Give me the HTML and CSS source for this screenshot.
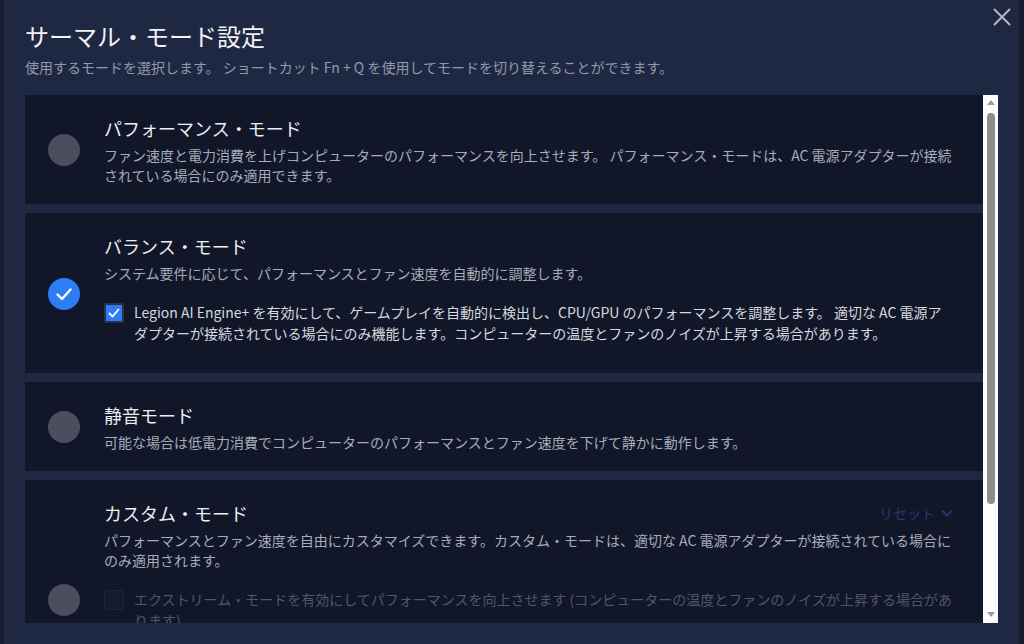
FILE: index.html
```html
<!DOCTYPE html>
<html lang="ja">
<head>
  <meta charset="UTF-8" />
  <title>サーマル・モード設定</title>
  <link rel="stylesheet" href="styles.css">
</head>
<body>
  <div class="dialog" role="dialog" aria-labelledby="dialogTitle">
    <button class="close-button" type="button" aria-label="閉じる">
      <svg width="18" height="18" viewBox="0 0 18 18" aria-hidden="true">
        <path d="M1.5 1.5 L16.5 16.5 M16.5 1.5 L1.5 16.5" stroke="#b2b7c3" stroke-width="2" stroke-linecap="round" fill="none"/>
      </svg>
    </button>

    <h1 class="dialog-title" id="dialogTitle">サーマル・モード設定</h1>
    <p class="dialog-subtitle">使用するモードを選択します。 ショートカット Fn + Q を使用してモードを切り替えることができます。</p>

    <div class="mode-area">
      <div class="mode-list" role="radiogroup" aria-label="サーマル・モード">
        <!-- パフォーマンス -->
        <div class="mode-card" role="radio" aria-checked="false">
          <span class="radio"></span>
          <div class="mode-body">
            <div class="mode-title">パフォーマンス・モード</div>
            <div class="mode-desc">ファン速度と電力消費を上げコンピューターのパフォーマンスを向上させます。 パフォーマンス・モードは、AC 電源アダプターが接続されている場合にのみ適用できます。</div>
          </div>
        </div>

        <!-- バランス -->
        <div class="mode-card" role="radio" aria-checked="true">
          <span class="radio checked">
            <svg width="32" height="32" viewBox="0 0 32 32" aria-hidden="true">
              <path d="M9.5 16.5 L14 21 L22.5 11.5" stroke="#fff" stroke-width="2.4" stroke-linecap="round" stroke-linejoin="round" fill="none"/>
            </svg>
          </span>
          <div class="mode-body">
            <div class="mode-title">バランス・モード</div>
            <div class="mode-desc">システム要件に応じて、パフォーマンスとファン速度を自動的に調整します。</div>
            <label class="option">
              <span class="checkbox checked">
                <svg width="16" height="16" viewBox="0 0 16 16" aria-hidden="true">
                  <path d="M3.5 8.5 L6.5 11.5 L12.5 4.5" stroke="#fff" stroke-width="1.8" stroke-linecap="round" stroke-linejoin="round" fill="none"/>
                </svg>
              </span>
              <span class="option-text">Legion AI Engine+ を有効にして、ゲームプレイを自動的に検出し、CPU/GPU のパフォーマンスを調整します。 適切な AC 電源アダプターが接続されている場合にのみ機能します。コンピューターの温度とファンのノイズが上昇する場合があります。</span>
            </label>
          </div>
        </div>

        <!-- 静音 -->
        <div class="mode-card" role="radio" aria-checked="false">
          <span class="radio"></span>
          <div class="mode-body">
            <div class="mode-title">静音モード</div>
            <div class="mode-desc">可能な場合は低電力消費でコンピューターのパフォーマンスとファン速度を下げて静かに動作します。</div>
          </div>
        </div>

        <!-- カスタム -->
        <div class="mode-card custom" role="radio" aria-checked="false">
          <span class="radio"></span>
          <div class="mode-body">
            <div class="mode-title-row">
              <div class="mode-title">カスタム・モード</div>
              <button class="reset-link" type="button" disabled>
                リセット
                <svg width="14" height="14" viewBox="0 0 14 14" aria-hidden="true">
                  <path d="M2.5 5 L7 9.5 L11.5 5" stroke="#243a6c" stroke-width="1.8" stroke-linecap="round" stroke-linejoin="round" fill="none"/>
                </svg>
              </button>
            </div>
            <div class="mode-desc">パフォーマンスとファン速度を自由にカスタマイズできます。カスタム・モードは、適切な AC 電源アダプターが接続されている場合にのみ適用されます。</div>
            <label class="option disabled">
              <span class="checkbox"></span>
              <span class="option-text">エクストリーム・モードを有効にしてパフォーマンスを向上させます (コンピューターの温度とファンのノイズが上昇する場合があります)。</span>
            </label>
          </div>
        </div>
      </div>

      <div class="scrollbar" aria-hidden="true">
        <span class="arrow-up"></span>
        <span class="thumb"></span>
        <span class="arrow-down"></span>
      </div>
    </div>
  </div>
</body>
</html>
```

FILE: styles.css
```css
* {
  box-sizing: border-box;
}

body {
  margin: 0;
  height: 644px;
  overflow: hidden;
  background-color: #171d30;
  font-family: "Noto Sans CJK JP", "Liberation Sans", sans-serif;
  color: #e6e8ec;
}

.dialog {
  position: relative;
  margin-left: 4px;
  width: 1015px;
  height: 644px;
  background-color: #1f2842;
  padding: 20px 0 0 21px;
}

.close-button {
  position: absolute;
  top: 8px;
  right: 8px;
  width: 18px;
  height: 18px;
  padding: 0;
  border: none;
  background: none;
  cursor: pointer;
  display: flex;
}

.dialog-title {
  margin: 0;
  font-size: 24px;
  line-height: 32px;
  font-weight: 400;
  color: #f1f2f5;
}

.dialog-subtitle {
  margin: 5px 0 0;
  font-size: 14px;
  line-height: 20px;
  color: #9199ac;
}

.mode-area {
  margin-top: 18px;
  height: 528px;
  display: flex;
}

.mode-list {
  flex: 1;
  overflow: hidden;
  display: flex;
  flex-direction: column;
  gap: 9px;
}

.mode-card {
  flex-shrink: 0;
  background-color: #111728;
  display: flex;
  align-items: center;
  padding: 20px 29px 19px 23px;
  gap: 24px;
  cursor: pointer;
}

.mode-card.custom {
  min-height: 238px;
}

.radio {
  flex-shrink: 0;
  width: 32px;
  height: 32px;
  border-radius: 50%;
  background-color: #4a4e5f;
  display: flex;
}

.radio.checked {
  background-color: #2f7df5;
}

.mode-body {
  flex: 1;
  align-self: flex-start;
}

.mode-title-row {
  display: flex;
  justify-content: space-between;
  align-items: center;
}

.mode-title {
  font-size: 18px;
  line-height: 26px;
  color: #eceef2;
  margin-bottom: 4px;
}

.mode-desc {
  font-size: 14px;
  line-height: 20px;
  color: #a6acb9;
}

.reset-link {
  display: flex;
  align-items: center;
  gap: 5px;
  padding: 0 0 4px;
  border: none;
  background: none;
  font-family: inherit;
  font-size: 14px;
  color: #243a6c;
}

.option {
  display: flex;
  align-items: flex-start;
  gap: 10px;
  margin: 19px 0 10px;
  font-size: 14px;
  line-height: 21px;
  color: #d6d9df;
}

.checkbox {
  flex-shrink: 0;
  width: 20px;
  height: 20px;
  margin-top: 1px;
  border: 2px solid #262d40;
  border-radius: 2px;
  background-color: #161c2d;
  display: flex;
}

.checkbox.checked {
  background-color: #2e7cf6;
  border-color: #2a3245;
}

.option.disabled {
  color: #4f5669;
}

.option.disabled .checkbox {
  border-width: 1px;
  border-color: #1f2537;
  background-color: #151b2c;
}

.scrollbar {
  flex-shrink: 0;
  width: 15px;
  margin-right: 21px;
  background-color: #fcfcfc;
  display: flex;
  flex-direction: column;
  align-items: center;
  padding: 5px 0 6px;
}

.arrow-up {
  border-left: 4px solid transparent;
  border-right: 4px solid transparent;
  border-bottom: 5px solid #9a9a9a;
}

.thumb {
  margin-top: 8px;
  width: 8px;
  height: 391px;
  border-radius: 4px;
  background-color: #8d8d8d;
}

.arrow-down {
  margin-top: auto;
  border-left: 4px solid transparent;
  border-right: 4px solid transparent;
  border-top: 5px solid #9a9a9a;
}
```
